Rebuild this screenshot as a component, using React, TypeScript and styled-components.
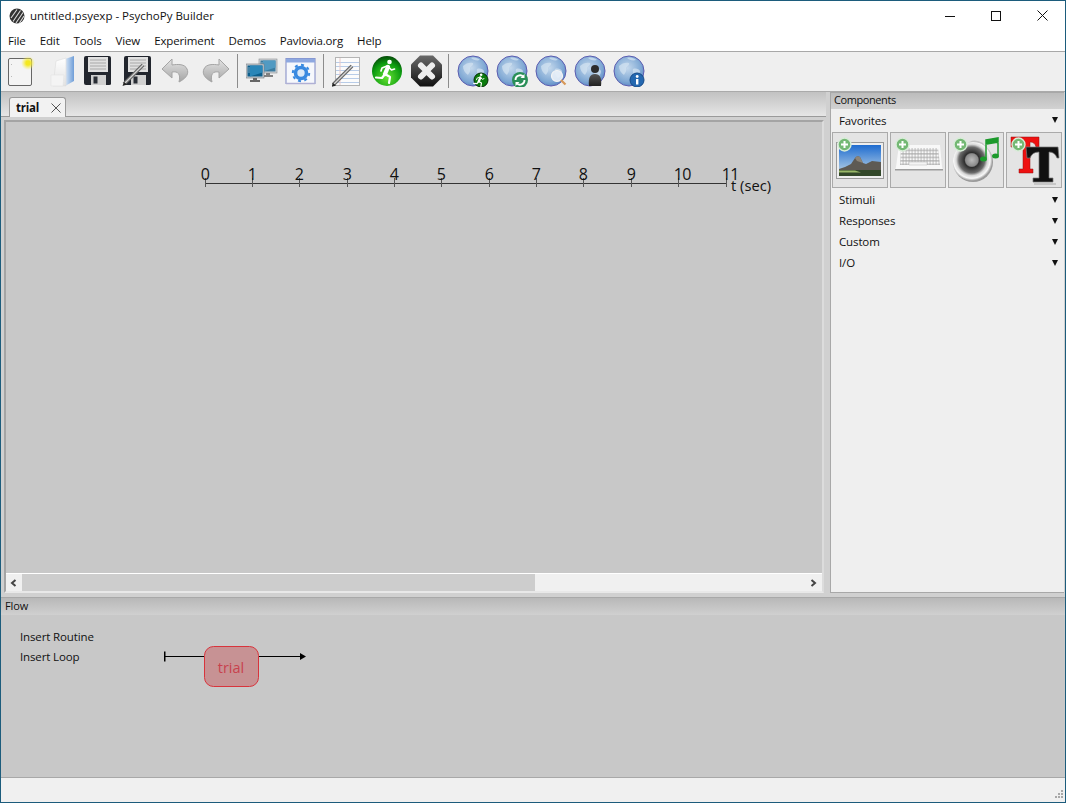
import React from "react";
import styled, { createGlobalStyle } from "styled-components";

const Global = createGlobalStyle`
  html, body { margin: 0; padding: 0; overflow: hidden; background: #c8c8c8; }
  #root { width: 1066px; height: 803px; }
  * { box-sizing: border-box; }
`;
const FONT = `"Open Sans", "Noto Sans", "Liberation Sans", sans-serif`;

const Win = styled.div`
  width: 1066px; height: 803px; border: 1px solid #1c5c7c; display: flex; flex-direction: column;
  font: 11.5px ${FONT}; letter-spacing: -0.13px; color: #111; background: #d0d0d0; overflow: hidden;
`;
const TitleBar = styled.div`
  height: 29px; flex: none; background: #fff; display: flex; align-items: center; padding-left: 8px;
`;
const TitleText = styled.span`flex: 1; letter-spacing: 0; margin-left: 5px;`;
const WinBtn = styled.div`
  width: 46px; height: 29px; display: flex; align-items: center; justify-content: center;
`;
const MenuBar = styled.div`
  height: 22px; flex: none; background: #fff; display: flex; align-items: center; border-bottom: 1px solid #a8a8a8;
`;
const MenuItem = styled.span`padding: 0 7px; line-height: 21px; margin-top: -1px;`;
const ToolBar = styled.div`
  height: 40px; flex: none; background: #efefef; display: flex; align-items: center; gap: 7px; padding: 0 0 2px 3px;
  border-bottom: 1px solid #aaa;
`;
const ToolBtn = styled.div`width: 32px; height: 32px; flex: none;`;
const Sep = styled.div`width: 1px; height: 34px; background: #8c8c8c; margin: 0 1px 0 -1px; flex: none;`;

const Top = styled.div`height: 502px; flex: none; display: flex; background: #d0d0d0;`;
const Notebook = styled.div`width: 825px; flex: none; display: flex; flex-direction: column;`;
const TabStrip = styled.div`
  height: 25px; flex: none; background: linear-gradient(#c2c2c2, #e6e6e6); padding: 5px 0 0 8px; border-bottom: 1px solid #9a9a9a;
  display: flex; align-items: flex-end;
`;
const Tab = styled.div`
  width: 57px; height: 20px; background: #f2f2f2; border: 1px solid #9a9a9a; border-bottom: none; border-radius: 3px 3px 0 0;
  display: flex; align-items: center; padding-left: 6px; gap: 12px; font-weight: 700; letter-spacing: -0.2px;
  margin-bottom: -1px; position: relative;
`;
const CanvasFrame = styled.div`
  flex: 1; margin: 3px 0 1px 3px; border: 2px solid #a4a4a4; border-right-color: #dcdcdc; border-bottom-color: #e8e8e8;
  display: flex; flex-direction: column; width: 820px;
`;
const Canvas = styled.div`flex: 1; background: #c8c8c8; overflow: hidden;`;
const HScroll = styled.div`
  height: 18px; flex: none; background: #f0f0f0; border-top: 1px solid #fff; display: flex; align-items: stretch;
`;
const ScrollBtn = styled.div<{ $w: number }>`
  width: ${(p) => p.$w}px; flex: none; display: flex; align-items: center; justify-content: center;
`;
const Thumb = styled.div`width: 513px; flex: none; background: #cdcdcd;`;
const Track = styled.div`flex: 1;`;

const Side = styled.div`
  width: 234px; margin: 0 0 1px 4px; flex: none; background: #efefef; border-left: 1px solid #a8a8a8; border-bottom: 1px solid #a8a8a8;
  display: flex; flex-direction: column;
`;
const PaneHead = styled.div`
  height: 17px; flex: none; background: linear-gradient(#bcbcbc, #d2d2d2); padding-left: 3px; font-size: 11px; line-height: 14px; border-top: 1px solid #a8a8a8;
`;
const SideHead = styled(PaneHead)`letter-spacing: -0.42px;`;
const CatRow = styled.div`
  height: 21px; flex: none; display: flex; align-items: center; justify-content: space-between; padding: 0 5px 0 8px;
`;
const FavRow = styled(CatRow)`height: 22px;`;
const Tri = styled.span`
  width: 0; height: 0; border-left: 3.5px solid transparent; border-right: 3.5px solid transparent; border-top: 6px solid #111; margin-right: 1px;
`;
const CompGrid = styled.div`display: flex; gap: 2px; padding: 1px 0 1px 1px;`;
const CompBtn = styled.div`
  width: 56px; height: 56px; background: #e4e4e4; border: 1px solid #aaa; position: relative; flex: none;
`;
const PlusBadge = styled.svg`position: absolute; left: 4px; top: 4px;`;

const FlowHead = styled(PaneHead)`margin-top: 3px; height: 18px; line-height: 15px; background: linear-gradient(#b8b8b8, #d0d0d0); padding-left: 4px;`;
const FlowBody = styled.div`height: 163px; flex: none; background: #c8c8c8; display: flex; border-bottom: 1px solid #a8a8a8;`;
const Links = styled.div`width: 162px; flex: none; padding: 13px 0 0 19px; display: flex; flex-direction: column; gap: 3px; line-height: 17px;`;
const Status = styled.div`flex: 1; background: #f0f0f0; display: flex; justify-content: flex-end; align-items: flex-end;`;

const Plus = () => (
  <PlusBadge width="15" height="15" viewBox="0 0 15 15">
    <circle cx="7.5" cy="7.5" r="6.5" fill="#74b874" stroke="#d8ecd8" strokeWidth="1.4" />
    <path d="M7.5 4v7M4 7.5h7" stroke="#fff" strokeWidth="2" />
  </PlusBadge>
);

const Svg: React.FC<{ children: React.ReactNode; w?: number; h?: number }> = ({ children, w = 32, h = 32 }) => (
  <svg width={w} height={h} viewBox={`0 0 ${w} ${h}`} style={{ display: "block" }}>{children}</svg>
);

const NewIcon = () => (
  <Svg>
    <defs><radialGradient id="glow"><stop offset="0.3" stopColor="#f4e820" /><stop offset="1" stopColor="#f8f060" stopOpacity="0" /></radialGradient></defs>
    <rect x="4.500" y="3.500" width="23" height="27" rx="1.500" fill="#f4f4f4" stroke="#666" />
    <path d="M7.500 9v1M7.500 21v1" stroke="#bbb" />
    <circle cx="24" cy="8" r="7" fill="url(#glow)" />
  </Svg>
);
const OpenIcon = () => (
  <Svg>
    <defs>
      <linearGradient id="fb" x1="0" x2="1"><stop offset="0" stopColor="#dbe8f6" /><stop offset="1" stopColor="#6f9ed8" /></linearGradient>
      <linearGradient id="fw" x1="0" y1="0" x2="0" y2="1"><stop offset="0" stopColor="#ffffff" /><stop offset="1" stopColor="#e2e2e2" /></linearGradient>
    </defs>
    <path d="M22 4l9-3v25l-9 5z" fill="url(#fb)" />
    <path d="M13 6l10-3v28H10z" fill="url(#fw)" stroke="#dcdcdc" strokeWidth=".6" />
    <path d="M8 20h13l-1 11H8z" fill="#f4f4f4" stroke="#e2e2e2" strokeWidth=".6" />
  </Svg>
);
const Floppy = () => (
  <>
    <path d="M2 3q0-2 2-2h23q2 0 2 2v26q0 1-2 1H4q-2 0-2-2z" fill="#22262e" />
    <rect x="6" y="2" width="20" height="15" fill="#e0e0e0" />
    <path d="M8 5h16M8 8h16M8 11h16M8 14h16" stroke="#a8a8a8" />
    <rect x="9" y="20" width="15" height="10" fill="#d0d0d0" />
    <rect x="11.500" y="21.500" width="4" height="7" fill="#2a2e36" />
  </>
);
const SaveIcon = () => <Svg><Floppy /></Svg>;
const Pencil: React.FC<{ x: number; y: number }> = ({ x, y }) => (
  <g transform={`translate(${x} ${y})`}>
    <path d="M1 23L20 4" stroke="#666" strokeWidth="3.800" />
    <path d="M1 23L20 4" stroke="#d4d4d4" strokeWidth="1.300" />
    <path d="M-.5 25l1.500-4 3 2.500z" fill="#222" />
  </g>
);
const SaveAsIcon = () => (
  <Svg><g transform="translate(1 0)"><Floppy /></g><Pencil x={2} y={6} /></Svg>
);
const arrow = "M12 4L2 14l10 9v-6c6-1 9 2 7 10 8-4 10-9 8-13-2-5-9-5-15-4z";
const UndoIcon = () => (
  <Svg>
    <defs><linearGradient id="ug" x1="0" y1="0" x2="0" y2="1"><stop offset="0" stopColor="#e4e4e4" /><stop offset="1" stopColor="#a4a4a4" /></linearGradient></defs>
    <path d={arrow} fill="url(#ug)" stroke="#a4a4a4" />
  </Svg>
);
const RedoIcon = () => (
  <Svg>
    <g transform="translate(32 0) scale(-1 1)"><path d={arrow} fill="url(#ug)" stroke="#a4a4a4" /></g>
  </Svg>
);
const Monitor: React.FC<{ x: number; y: number; o?: number }> = ({ x, y, o = 1 }) => (
  <g transform={`translate(${x} ${y})`} opacity={o}>
    <rect x="0" y="0" width="18" height="14" fill="#c8ccd0" stroke="#70767c" strokeWidth=".6" />
    <rect x="1.500" y="1.500" width="15" height="11" fill="#0d5f8c" />
    <path d="M4 1.500h12.500v7L4 12.500z" fill="#2a86b8" />
    <path d="M2.500 4h1M2.500 6h1M2.500 8h1" stroke="#dfe8f0" />
    <path d="M7 14h4v2h3v2H4v-2h3z" fill="#666" />
  </g>
);
const MonitorsIcon = () => (
  <Svg>
    <Monitor x={13} y={4} o={0.8} />
    <Monitor x={0} y={9} />
  </Svg>
);
const GearIcon = () => (
  <Svg>
    <rect x="1" y="3.500" width="29" height="25" fill="#f6f8fc" stroke="#7f88c4" />
    <rect x="1" y="3.500" width="29" height="4" fill="#8ea8e0" />
    <circle cx="16" cy="18" r="5.500" fill="#dceaf8" stroke="#3a8ae0" strokeWidth="3.600" />
    <circle cx="16" cy="18" r="8.200" fill="none" stroke="#3a8ae0" strokeWidth="2" strokeDasharray="3 3.400" />
    <path d="M1 28.500h29" stroke="#b0b0d4" strokeWidth="1.500" />
  </Svg>
);
const NoteIcon = () => (
  <Svg>
    <rect x="3.500" y="2.500" width="24" height="28" fill="#fbfbfb" stroke="#b4b4b4" />
    <path d="M4 7.500h23M4 11.500h23M4 15.500h23M4 19.500h23M4 23.500h23M4 27.500h23" stroke="#b8cce8" />
    <path d="M8 3v27" stroke="#e8c8c8" />
    <Pencil x={0} y={7} />
  </Svg>
);
const Runner: React.FC<{ s?: number; x?: number; y?: number }> = ({ s = 1, x = 0, y = 0 }) => (
  <g transform={`translate(${x} ${y}) scale(${s})`} fill="none" stroke="#fff" strokeLinecap="round" strokeLinejoin="round">
    <circle cx="18.500" cy="7" r="2.300" fill="#fff" stroke="none" />
    <path d="M17 12l-3 7" strokeWidth="4.200" />
    <path d="M16 11l-5 2-1 3M17.500 12l3 3 3-1" strokeWidth="1.700" />
    <path d="M14 19l5 3-1 6M14 19l-3 4-6-.5" strokeWidth="2.200" />
  </g>
);
const RunIcon = () => (
  <Svg>
    <defs><radialGradient id="gr" cx=".5" cy=".72" r=".8"><stop offset="0" stopColor="#66e232" /><stop offset=".6" stopColor="#0c9c10" /><stop offset="1" stopColor="#022e06" /></radialGradient></defs>
    <circle cx="16" cy="16" r="15" fill="url(#gr)" />
    <Runner x={0} y={0} />
  </Svg>
);
const StopIcon = () => (
  <Svg>
    <defs><linearGradient id="bk" x1="0" y1="0" x2="0" y2="1"><stop offset="0" stopColor="#6a6a6a" /><stop offset="1" stopColor="#111" /></linearGradient></defs>
    <path d="M10 .500h13l9 9v13l-9 9H10l-9-9v-13z" fill="url(#bk)" />
    <path d="M11 10.500l11 11M22 10.500l-11 11" stroke="#eee" strokeWidth="6" strokeLinecap="round" />
  </Svg>
);
const Globe = ({ children }: { children?: React.ReactNode }) => (
  <Svg>
    <defs><radialGradient id="gb" cx=".45" cy=".4" r=".7"><stop offset="0" stopColor="#c4d8ec" /><stop offset=".65" stopColor="#7fa8d4" /><stop offset="1" stopColor="#4a78bc" /></radialGradient></defs>
    <circle cx="16" cy="16" r="15" fill="url(#gb)" stroke="#5c5cb0" />
    <path d="M6 11c3-3 7-4 10-3 1 2-2 3-3 5 1 3-1 5-2 7-3-2-5-5-5-9zM20 14c3-1 6 0 7 2 0 3-2 6-4 7-2-2-4-6-3-9zM14 3c3-1 7 0 9 2-3 1-7 0-9-2z" fill="#d2e2f0" opacity=".75" />
    {children}
  </Svg>
);
const GlobeRun = () => (
  <Globe>
    <circle cx="24" cy="25" r="7" fill="#0b7a0c" stroke="#042c05" />
    <Runner s={0.55} x={14} y={16} />
  </Globe>
);
const GlobeSync = () => (
  <Globe>
    <circle cx="24" cy="25" r="8" fill="#2a8f58" />
    <path d="M19.500 25a4.500 4.500 0 0 1 8-3M28.500 25a4.500 4.500 0 0 1-8 3" fill="none" stroke="#fff" strokeWidth="1.800" />
    <path d="M28.500 19v4h-4zM19.500 31v-4h4z" fill="#fff" />
  </Globe>
);
const GlobeSearch = () => (
  <Globe>
    <circle cx="22" cy="21" r="5.500" fill="#e8f0f8" fillOpacity=".9" stroke="#f4f4f4" strokeWidth="1.200" />
    <path d="M26 25l4.500 4.500" stroke="#d89858" strokeWidth="2.200" />
  </Globe>
);
const GlobeUser = () => (
  <Globe>
    <defs><linearGradient id="ub" x1="0" y1="0" x2="0" y2="1"><stop offset="0" stopColor="#555" /><stop offset="1" stopColor="#222" /></linearGradient></defs>
    <circle cx="21" cy="14" r="4" fill="#2c2c2c" />
    <path d="M15 31c-1-8 1-12 6-12s7 4 6 12z" fill="url(#ub)" />
  </Globe>
);
const GlobeInfo = () => (
  <Globe>
    <circle cx="24" cy="25" r="7" fill="#2468b0" stroke="#154a88" />
    <rect x="23" y="24" width="2.400" height="5.500" fill="#fff" />
    <circle cx="24.200" cy="21.500" r="1.400" fill="#fff" />
  </Globe>
);

const ImageComp = () => (
  <svg width="54" height="54" viewBox="0 0 54 54">
    <defs><linearGradient id="sky" x1="0" y1="0" x2="0" y2="1"><stop offset="0" stopColor="#1e6cd0" /><stop offset="1" stopColor="#c8dce8" /></linearGradient></defs>
    <rect x="3.500" y="9.500" width="47" height="36" fill="#eee" stroke="#999" />
    <rect x="6" y="12" width="42" height="31" fill="url(#sky)" />
    <path d="M6 36l6-2 6-3 4-6q2-3 5-1l3 6 3 1 6-3 9 1v14H6z" fill="#5e5a54" />
    <path d="M6 37h42v6H6z" fill="#33482a" />
    <path d="M6 37.500l16 0 6 2H6z" fill="#9ab868" />
    <path d="M22 25q2-3 5-1l3 6-6-2z" fill="#8c8478" />
  </svg>
);
const KeyboardComp = () => (
  <svg width="54" height="54" viewBox="0 0 54 54">
    <defs><pattern id="keys" width="3" height="3.500" patternUnits="userSpaceOnUse"><rect width="3" height="3.500" fill="#a4a4a4" /><rect x=".4" y=".4" width="2.300" height="2.500" fill="#f8f8f8" /></pattern></defs>
    <path d="M8 12h41l2 22 1 3H4l1-3z" fill="#f8f8f8" />
    <path d="M10 15h37l2 17H9z" fill="url(#keys)" />
    <path d="M4 36h48v1.500H4z" fill="#9c9c9c" />
    <path d="M18 29h18v3H18z" fill="#f4f4f4" stroke="#bbb" strokeWidth=".5" />
  </svg>
);
const SoundComp = () => (
  <svg width="54" height="54" viewBox="0 0 54 54">
    <defs><radialGradient id="spk" cx=".47" cy=".45" r=".52"><stop offset="0" stopColor="#bcbcbc" /><stop offset=".3" stopColor="#8a8a8a" /><stop offset=".36" stopColor="#2e2e2e" /><stop offset=".62" stopColor="#6a6a6a" /><stop offset=".75" stopColor="#d8d8d8" /><stop offset=".88" stopColor="#f8f8f8" /><stop offset="1" stopColor="#9a9a9a" /></radialGradient></defs>
    <path d="M16 12q8-8 18-2l6 10-20 0z" fill="#c4c4c4" />
    <circle cx="24" cy="29" r="20" fill="url(#spk)" />
    <path d="M37 7v18M49 5v17M37 7l12-2v4l-12 2z" stroke="#1c9a2c" strokeWidth="1.500" fill="#1c9a2c" />
    <ellipse cx="34.500" cy="26" rx="3.500" ry="2.500" fill="#1c9a2c" />
    <ellipse cx="46.500" cy="23" rx="3.500" ry="2.500" fill="#1c9a2c" />
  </svg>
);
const TextComp = () => (
  <svg width="54" height="54" viewBox="0 0 54 54">
    <path d="M4 4h28v10h-3q-1-5-6-5v27h3v4H12v-4h4V9q-7 0-9 5H4z" fill="#ee1111" stroke="#901010" strokeWidth=".5" />
    <path d="M19 14h32l1 11h-2q-2-6-8-6v26h4v4H26v-4h6V19q-7 0-9 6h-3z" fill="#111" stroke="#777" strokeWidth=".7" />
    <path d="M27 51h22" stroke="#aaa" />
  </svg>
);

const Timeline = () => {
  const ticks = Array.from({ length: 12 }, (_, i) => i);
  const xAt = (i: number) => Math.floor(199 + i * 47.37);
  return (
    <svg width="816" height="120" style={{ display: "block" }}>
      <path d="M199 61.500H720.500" stroke="#333" strokeWidth="1" />
      {ticks.map((i) => (
        <g key={i}>
          <path d={`M${xAt(i) + 0.5} 56V65`} stroke="#555" />
          <text x={xAt(i) - 4.2} y={58} fontFamily={FONT} fontSize="16" fill="#111" letterSpacing="-0.6">{i}</text>
        </g>
      ))}
      <text x="725" y="69" fontFamily={FONT} fontSize="14.700" fill="#111" letterSpacing="0">t (sec)</text>
    </svg>
  );
};
const FlowDiagram = () => (
  <svg width="200" height="100" style={{ display: "block" }}>
    <path d="M1.500 41.500H41M96 41.500H138" stroke="#000" strokeWidth="1" />
    <path d="M1 36.500h1.500v10H1z" fill="#000" />
    <path d="M137 38l6 3.500-6 3.500z" fill="#000" />
    <rect x="41.500" y="31.500" width="54" height="40" rx="9" fill="#c79294" stroke="#d8343c" />
    <text x="68" y="58" fontFamily={FONT} fontSize="14.500" fill="#c8424e" textAnchor="middle" letterSpacing="0">trial</text>
  </svg>
);

export default function App() {
  const menus = ["File", "Edit", "Tools", "View", "Experiment", "Demos", "Pavlovia.org", "Help"];
  const cats = ["Stimuli", "Responses", "Custom", "I/O"];
  return (
    <Win>
      <Global />
      <TitleBar>
        <svg width="16" height="16" viewBox="0 0 16 16">
          <circle cx="8" cy="8" r="7.500" fill="#333" />
          <path d="M2 10L8 1.500M4 13.500L11.500 2.500M7 15L14 4.500M10.500 15L15 8" stroke="#ddd" strokeWidth="1.100" />
        </svg>
        <TitleText>untitled.psyexp - PsychoPy Builder</TitleText>
        <WinBtn><svg width="10" height="10"><path d="M0 5.500h10" stroke="#111" /></svg></WinBtn>
        <WinBtn><svg width="10" height="10"><rect x=".5" y=".5" width="9" height="9" fill="none" stroke="#111" /></svg></WinBtn>
        <WinBtn><svg width="11" height="11"><path d="M.5.500l10 10M10.500.500l-10 10" stroke="#111" /></svg></WinBtn>
      </TitleBar>
      <MenuBar>{menus.map((m) => <MenuItem key={m}>{m}</MenuItem>)}</MenuBar>
      <ToolBar>
        <ToolBtn><NewIcon /></ToolBtn>
        <ToolBtn><OpenIcon /></ToolBtn>
        <ToolBtn><SaveIcon /></ToolBtn>
        <ToolBtn><SaveAsIcon /></ToolBtn>
        <ToolBtn><UndoIcon /></ToolBtn>
        <ToolBtn><RedoIcon /></ToolBtn>
        <Sep />
        <ToolBtn><MonitorsIcon /></ToolBtn>
        <ToolBtn><GearIcon /></ToolBtn>
        <Sep />
        <ToolBtn><NoteIcon /></ToolBtn>
        <ToolBtn><RunIcon /></ToolBtn>
        <ToolBtn><StopIcon /></ToolBtn>
        <Sep />
        <ToolBtn><GlobeRun /></ToolBtn>
        <ToolBtn><GlobeSync /></ToolBtn>
        <ToolBtn><GlobeSearch /></ToolBtn>
        <ToolBtn><GlobeUser /></ToolBtn>
        <ToolBtn><GlobeInfo /></ToolBtn>
      </ToolBar>
      <Top>
        <Notebook>
          <TabStrip>
            <Tab>trial
              <svg width="10" height="10"><path d="M.5.500l9 9M9.500.500l-9 9" stroke="#555" /></svg>
            </Tab>
          </TabStrip>
          <CanvasFrame>
            <Canvas><Timeline /></Canvas>
            <HScroll>
              <ScrollBtn $w={16}><svg width="8" height="8"><path d="M5.500 1L2 4l3.500 3" fill="none" stroke="#444" strokeWidth="2" /></svg></ScrollBtn>
              <Thumb />
              <Track />
              <ScrollBtn $w={19}><svg width="8" height="8"><path d="M2.500 1L6 4 2.500 7" fill="none" stroke="#444" strokeWidth="2" /></svg></ScrollBtn>
            </HScroll>
          </CanvasFrame>
        </Notebook>
        <Side>
          <SideHead>Components</SideHead>
          <FavRow>Favorites<Tri /></FavRow>
          <CompGrid>
            <CompBtn><ImageComp /><Plus /></CompBtn>
            <CompBtn><KeyboardComp /><Plus /></CompBtn>
            <CompBtn><SoundComp /><Plus /></CompBtn>
            <CompBtn><TextComp /><Plus /></CompBtn>
          </CompGrid>
          {cats.map((c) => <CatRow key={c}>{c}<Tri /></CatRow>)}
        </Side>
      </Top>
      <FlowHead>Flow</FlowHead>
      <FlowBody>
        <Links><span>Insert Routine</span><span>Insert Loop</span></Links>
        <FlowDiagram />
      </FlowBody>
      <Status>
        <svg width="12" height="12" style={{ marginRight: 1, marginBottom: 1 }}>
          <path d="M9 1h2v2H9zM6 4h2v2H6zM9 4h2v2H9zM3 7h2v2H3zM6 7h2v2H6zM9 7h2v2H9z" fill="#a8a8a8" />
        </svg>
      </Status>
    </Win>
  );
}
